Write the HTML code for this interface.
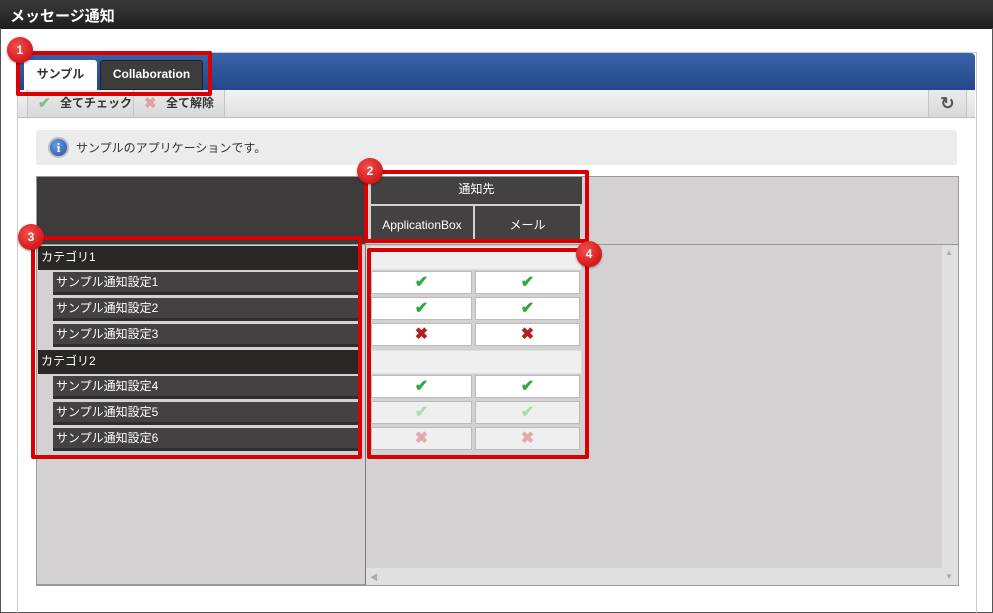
<!DOCTYPE html>
<html><head><meta charset="utf-8"><style>
*{margin:0;padding:0;box-sizing:border-box}
body{width:993px;height:613px;background:#fff;position:relative;overflow:hidden;font-family:"Liberation Sans","Noto Sans CJK JP",sans-serif;font-size:12px;color:#333}
.a{position:absolute}
.title{left:0;top:0;width:993px;height:29px;background:linear-gradient(#3a3a3a,#1e1e1e);color:#fff;font-size:15px;font-weight:bold;padding:5px 10px}
.win{left:0;top:28px;width:993px;height:585px;border:1px solid #555;border-top:none}
.panel{left:17px;top:52px;width:960px;height:561px;border:1px solid #ccc;border-bottom:none}
.blue{left:18px;top:53px;width:957px;height:37px;background:linear-gradient(#3a63a8,#23478a);border-radius:4px 4px 0 0}
.tab1{left:24px;top:60px;width:73px;height:31px;background:#fff;border-radius:3px 3px 0 0;font-weight:bold;font-size:12px;text-align:center;line-height:28px;color:#333}
.tab2{left:100px;top:60px;width:103px;height:30px;background:#3c3c3c;border:1px solid #222;border-radius:3px 3px 0 0;color:#fff;font-weight:bold;text-align:center;line-height:27px}
.tool{left:18px;top:90px;width:957px;height:28px;background:linear-gradient(#f2f2f2,#e0e0e0);border-bottom:1px solid #bbb}
.btn{top:90px;height:27px;border-left:1px solid #c4c4c4;border-right:1px solid #c4c4c4;background:linear-gradient(#ebebeb,#d8d8d8);font-weight:bold;line-height:27px;padding-left:32px;color:#333}
.info{left:36px;top:130px;width:921px;height:35px;background:#ececec;border-radius:3px;padding:9px 0 0 40px;font-size:12px;color:#333}
.grid{left:36px;top:176px;width:923px;height:410px;background:#d3d1d2;border:1px solid #999;border-bottom:2px solid #999}
.hl{left:37px;top:177px;width:328px;height:67px;background:#3d3b3c}
.th{background:#434142;color:#fff;text-align:center}
.cat{left:38px;width:320px;height:24px;background:#2a2827;color:#fff;line-height:23px;padding-left:3px}
.item{left:53px;width:305px;height:23px;background:#434142;border-bottom:3px solid #2f2d2e;color:#fff;line-height:20px;padding-left:3px}
.cell{width:101px;height:23px;background:#fff;border:1px solid #bbb;text-align:center;line-height:21px;font-size:16px;font-weight:bold}
.dis{background:#efefef}
.crow{left:371px;width:211px;height:24px;background:#efefef;border:1px solid #ddd}
.ok{color:#2da83a}.ng{color:#b51e1e}.okd{color:#a9dcae}.ngd{color:#e2aaaa}
.red{border:4px solid #d80000;border-radius:2px}
.num{width:26px;height:26px;border-radius:50%;background:radial-gradient(circle at 40% 35%,#f25050,#c80000);color:#fff;font-weight:bold;font-size:12px;text-align:center;line-height:26px;box-shadow:0 1px 2px rgba(0,0,0,.4)}
</style></head><body>
<div class="a title">メッセージ通知</div>
<div class="a win"></div>
<div class="a panel"></div>
<div class="a blue"></div>
<div class="a tab1">サンプル</div>
<div class="a tab2">Collaboration</div>
<div class="a tool"></div>
<div class="a btn" style="left:27px;width:107px"><span class="a" style="left:10px;top:0;color:#7cc47f;font-size:15px">✔</span>全てチェック</div>
<div class="a btn" style="left:133px;width:92px"><span class="a" style="left:10px;top:0;color:#e4a0a0;font-size:15px">✖</span>全て解除</div>
<div class="a btn" style="left:928px;width:39px;padding:0;text-align:center;color:#555;font-size:17px">↻</div>
<div class="a info">サンプルのアプリケーションです。</div>
<div class="a" style="left:48px;top:137px;width:21px;height:21px;border-radius:50%;background:radial-gradient(circle at 40% 35%,#6d9de0,#1d4fa8);border:2px solid #bbb;color:#fff;font-weight:bold;font-family:'Liberation Serif',serif;text-align:center;line-height:17px;font-size:13px">i</div>
<div class="a grid"></div>
<div class="a hl"></div>
<div class="a" style="left:365px;top:177px;width:1px;height:408px;background:#777"></div>
<div class="a" style="left:37px;top:244px;width:921px;height:1px;background:#999"></div>
<div class="a th" style="left:371px;top:177px;width:211px;height:27px;line-height:25px">通知先</div>
<div class="a th" style="left:371px;top:206px;width:102px;height:35px;line-height:38px">ApplicationBox</div>
<div class="a th" style="left:475px;top:206px;width:105px;height:35px;line-height:38px">メール</div>
<div class="a" style="left:942px;top:245px;width:16px;height:340px;background:#e0e0e0"></div>
<div class="a" style="left:366px;top:568px;width:592px;height:17px;background:#e0e0e0"></div>
<div class="a" style="left:945px;top:248px;color:#aaa;font-size:8px">▲</div>
<div class="a" style="left:945px;top:572px;color:#aaa;font-size:8px">▼</div>
<div class="a" style="left:370px;top:572px;color:#aaa;font-size:8px">◀</div>

<div class="a cat" style="top:246px">カテゴリ1</div>
<div class="a item" style="top:272px">サンプル通知設定1</div>
<div class="a item" style="top:298px">サンプル通知設定2</div>
<div class="a item" style="top:324px">サンプル通知設定3</div>
<div class="a cat" style="top:350px">カテゴリ2</div>
<div class="a item" style="top:376px">サンプル通知設定4</div>
<div class="a item" style="top:402px">サンプル通知設定5</div>
<div class="a item" style="top:428px">サンプル通知設定6</div>

<div class="a crow" style="top:246px"></div>
<div class="a cell ok" style="left:371px;top:271px">✔</div><div class="a cell ok" style="left:475px;top:271px;width:105px">✔</div>
<div class="a cell ok" style="left:371px;top:297px">✔</div><div class="a cell ok" style="left:475px;top:297px;width:105px">✔</div>
<div class="a cell ng" style="left:371px;top:323px">✖</div><div class="a cell ng" style="left:475px;top:323px;width:105px">✖</div>
<div class="a crow" style="top:350px"></div>
<div class="a cell ok" style="left:371px;top:375px">✔</div><div class="a cell ok" style="left:475px;top:375px;width:105px">✔</div>
<div class="a cell okd dis" style="left:371px;top:401px">✔</div><div class="a cell okd dis" style="left:475px;top:401px;width:105px">✔</div>
<div class="a cell ngd dis" style="left:371px;top:427px">✖</div><div class="a cell ngd dis" style="left:475px;top:427px;width:105px">✖</div>

<div class="a red" style="left:16px;top:51px;width:196px;height:45px"></div>
<div class="a red" style="left:364px;top:170px;width:225px;height:73px"></div>
<div class="a red" style="left:31px;top:236px;width:331px;height:223px"></div>
<div class="a red" style="left:367px;top:248px;width:222px;height:211px"></div>
<div class="a num" style="left:7px;top:37px">1</div>
<div class="a num" style="left:357px;top:158px">2</div>
<div class="a num" style="left:18px;top:224px">3</div>
<div class="a num" style="left:576px;top:241px">4</div>
</body></html>
